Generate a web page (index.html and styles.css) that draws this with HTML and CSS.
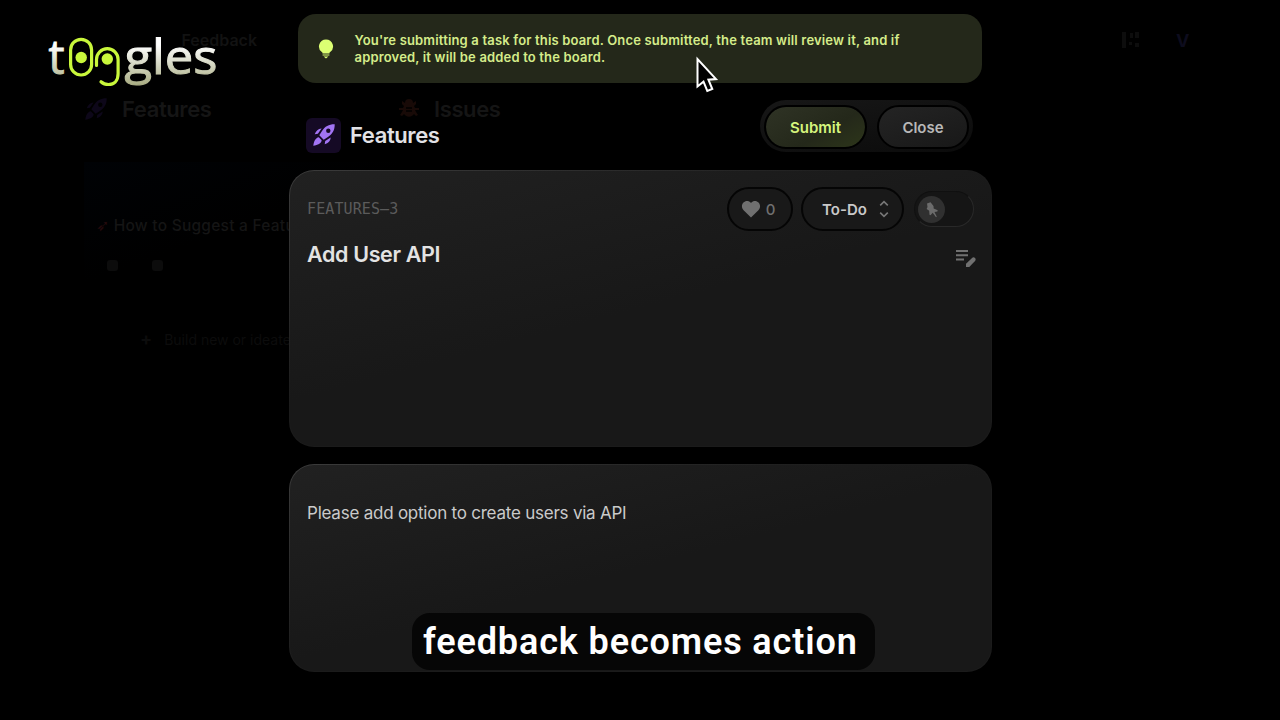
FILE: index.html
```
<!DOCTYPE html>
<html lang="en">
<head>
    <meta charset="UTF-8">
    <meta name="viewport" content="width=device-width, initial-scale=1.0">
    <title>Toggles - Features</title>
    <link rel="stylesheet" href="styles.css">
</head>
<body>
    <!-- Board behind the dialog -->
    <div class="board">
        <header class="board-top">
            <div class="board-name">Feedback</div>
            <svg class="board-view" width="20" height="18" viewBox="0 0 20 18" fill="currentColor">
                <path d="M1 1h4v16H1zM9 2h3v5H9zM14 1h4v6h-4zM8 11h3v3H8zM14 12h4v4h-4z"/>
            </svg>
            <div class="avatar">V</div>
        </header>
        <div class="columns">
            <section class="column">
                <h2>
                    <svg class="col-rocket" width="24" height="24" viewBox="0 0 24 24"><use href="#rocket"/></svg>
                    Features
                </h2>
                <div class="board-card">
                    <p><span class="pin-mark">➶</span> How to Suggest a Feature</p>
                    <div class="board-meta"><i></i><i></i></div>
                </div>
                <div class="add-new"><b>+</b> Build new or ideate</div>
            </section>
            <section class="column">
                <h2>
                    <svg class="col-bug" width="22" height="22" viewBox="0 0 22 22" fill="currentColor">
                        <path d="M7 5a4 4 0 0 1 8 0l3-2v3l-2 2 1 2h4v2h-4l1 2 2 3-2 1-2-2a6 6 0 0 1-10 0l-2 2-2-1 2-3 1-2H1v-2h4l1-2-2-2V3z"/>
                        <path d="M8 10h6M8 13h6" stroke="#000" stroke-width="1.5"/>
                    </svg>
                    Issues
                </h2>
            </section>
        </div>
    </div>

    <!-- Submit dialog -->
    <main class="dialog">
        <div class="notice">
            <svg width="16" height="20" viewBox="0 0 16 20" fill="currentColor">
                <path d="M8 .5a7 7 0 0 0-4.200 12.600c.6.4.7.7.7 1.400h7c0-.7.1-1 .7-1.400A7 7 0 0 0 8 .5z"/>
                <path d="M4.600 15.400h6.800v1.200H4.600zM5.600 17.400h4.800L8 19.400z"/>
            </svg>
            <p>
                You're submitting a task for this board. Once submitted, the team will review it, and if<br>
                approved, it will be added to the board.
            </p>
        </div>

        <div class="dialog-head">
            <div class="dialog-title">
                <div class="rocket-box">
                    <svg width="24" height="24" viewBox="0 0 24 24" fill="currentColor">
                        <g id="rocket">
                            <path fill-rule="evenodd" d="M22.700 1.300C17 1.200 13 3.300 10 8.100L7.300 12.300l4.400 4.400 4.200-2.700c4.800-3 6.900-7 6.800-12.700zM16.300 5.600a2.200 2.200 0 1 1 0 4.400 2.200 2.200 0 0 1 0-4.400z"/>
                            <path d="M9.600 5.400C6.300 5.300 4 7.700 2.700 11.300l3.200-.5zM18.600 14.400c.1 3.300-2.300 5.600-5.900 6.900l.5-3.200zM6.800 14.300l2.900 2.900c-.6 3.300-3.700 4.800-8.400 5.500.7-4.700 2.200-7.800 5.500-8.400z"/>
                        </g>
                    </svg>
                </div>
                <h1>Features</h1>
            </div>
            <div class="actions">
                <button class="submit">Submit</button>
                <button class="close">Close</button>
            </div>
        </div>

        <section class="card task">
            <div class="task-bar">
                <span class="task-id">FEATURES–3</span>
                <div class="pill votes">
                    <svg width="20" height="18" viewBox="0 0 20 18" fill="currentColor"><path d="M10 17.500 2.600 10.200C-2.500 4.800 5.200-2.500 10 3.100c4.800-5.600 12.500 1.700 7.400 7.100z"/></svg>
                    0
                </div>
                <div class="pill status">
                    To-Do
                    <svg width="10" height="18" viewBox="0 0 10 18" fill="none" stroke="currentColor" stroke-width="1.6"><path d="M1.200 5.400 5 1.600l3.800 3.800M1.200 12.600 5 16.400l3.800-3.800"/></svg>
                </div>
                <div class="toggle">
                    <div class="knob">
                        <svg width="16" height="17" viewBox="0 0 16 17" fill="currentColor"><path d="M3 2.500 6.500 1.200 9.500 5l.2 2.500 4 1.800-.3 1.200-2.900.5 2.300 4.800-.8.400-3.300-4.400-2.200 2.400-1-.5-.3-3.900L2.600 8l.9-2z"/></svg>
                    </div>
                </div>
            </div>
            <div class="task-head">
                <h2>Add User API</h2>
                <svg width="21" height="19" viewBox="0 0 21 19" fill="currentColor">
                    <path d="M1 1h12v2H1zM1 5.200h12v2H1zM1 9.400h8v2H1z"/>
                    <path d="M11 18v-3.300l5.800-5.500c1.100-1 2.200-1.200 3.200-.2s.8 2.200-.2 3.300L14.300 18z"/>
                </svg>
            </div>
        </section>

        <section class="card description">
            <p>Please add option to create users via API</p>
        </section>
    </main>

    <svg class="logo" width="180" height="72" viewBox="0 0 180 72">
        <defs>
            <linearGradient id="fade" gradientUnits="userSpaceOnUse" x1="0" y1="8" x2="0" y2="55">
                <stop offset="0.150" stop-color="#fff"/>
                <stop offset="1" stop-color="#a9ad83"/>
            </linearGradient>
        </defs>
        <text x="3.500" y="44" textLength="16" lengthAdjust="spacingAndGlyphs">t</text>
        <g fill="none" stroke="#c9f73b" stroke-width="3.200" stroke-linecap="round">
            <rect x="25.600" y="9.400" width="21" height="35.600" rx="10.500"/>
            <path d="M51.500 35.500V29.500a10.800 10.800 0 0 1 21.600 0V43.500c0 8-4.600 11-9.600 11-3.200 0-5.500-1-7.500-2.800"/>
        </g>
        <circle cx="36.200" cy="27.500" r="5.700" fill="#c9f73b"/>
        <circle cx="62.300" cy="29" r="5.700" fill="#c9f73b"/>
        <text x="79.500" y="44" textLength="93" lengthAdjust="spacingAndGlyphs">gles</text>
    </svg>

    <svg class="pointer" width="26" height="40" viewBox="0 0 26 40">
        <path d="M4.500 4v27.500l6-4.800 3.800 9.300 5-2-3.900-9.300 7.600-.6z" fill="#000" stroke="#fff" stroke-width="2"/>
    </svg>

    <div class="caption">feedback becomes action</div>
</body>
</html>
```
FILE: styles.css
```
* {
    margin: 0;
    padding: 0;
    box-sizing: border-box;
}
body {
    position: relative;
    width: 1280px;
    height: 720px;
    overflow: hidden;
    background: #000;
    font-family: Inter, sans-serif;
}

/* Board */
.board {
    position: absolute;
    inset: 0;
    padding: 28px 84px;
    color: #151515;
}
.board-top {
    display: flex;
    align-items: center;
    height: 24px;
}
.board-name {
    width: 173px;
    margin-right: auto;
    text-align: right;
    font-size: 16px;
    font-weight: 600;
    color: #121212;
}
.board-view {
    margin-right: 35px;
    color: #0d0d0d;
}
.avatar {
    width: 20px;
    font-size: 18px;
    font-weight: 700;
    color: #0d0c1d;
}
.columns {
    display: flex;
    margin-top: 43px;
}
.column {
    width: 312px;
}
.column h2 {
    display: flex;
    align-items: center;
    gap: 14px;
    height: 28px;
    font-size: 22px;
    font-weight: 600;
    letter-spacing: -0.4px;
}
.col-rocket {
    fill: #0d0719;
}
.col-bug {
    margin-left: 2px;
    color: #180a07;
}
.board-card {
    margin-top: 39px;
    height: 157px;
    padding: 54px 12px 0;
    font-size: 15.5px;
    font-weight: 500;
    letter-spacing: 0.25px;
    white-space: nowrap;
    background: linear-gradient(160deg, #000205, #000 45%);
}
.pin-mark {
    color: #240a0c;
}
.board-meta {
    display: flex;
    gap: 34px;
    margin: 25px 11px;
}
.board-meta i {
    width: 11px;
    height: 11px;
    border-radius: 3px;
    background: #0c0c0c;
}
.add-new {
    margin: 9px 0 0 56px;
    font-size: 14px;
    color: #0c0c0c;
}
.add-new b {
    margin-right: 8px;
    font-size: 18px;
}

/* Dialog */
.dialog {
    position: relative;
    width: 703px;
    margin: 0 0 0 289px;
    padding-top: 14px;
}
.notice {
    display: flex;
    align-items: center;
    gap: 20.5px;
    width: 684px;
    height: 69px;
    margin-left: 9px;
    padding-left: 20px;
    border-radius: 18px;
    background: #24281a;
    color: #dcff73;
}
.notice p {
    color: #d5ec8a;
    font-size: 13px;
    font-weight: 600;
    line-height: 17px;
    letter-spacing: 0.17px;
    white-space: nowrap;
}
.dialog-head {
    display: flex;
    justify-content: space-between;
    height: 87px;
    padding: 17px 19px 0 17px;
}
.dialog-title {
    display: flex;
    align-items: center;
    gap: 9px;
    height: 36px;
    margin-top: 17px;
}
.rocket-box {
    display: flex;
    align-items: center;
    justify-content: center;
    width: 35px;
    height: 35px;
    border-radius: 6px;
    background: #150a25;
    color: #a274f4;
}
.dialog-title h1 {
    font-size: 22px;
    font-weight: 600;
    letter-spacing: -0.4px;
    color: #e2e2e6;
}
.actions {
    display: flex;
    gap: 10px;
    width: 213px;
    height: 52px;
    padding: 5px 4px;
    border-radius: 26px;
    background: linear-gradient(170deg, #171717, #0b0b0b);
}
.actions button {
    height: 44px;
    border: 2px solid #000;
    border-radius: 22px;
    font-family: inherit;
    font-size: 15px;
    font-weight: 600;
}
.submit {
    width: 103px;
    background: linear-gradient(150deg, #2f3325, #24281a 60%, #2d361a) padding-box;
    color: #d5f47c;
}
.close {
    width: 92px;
    background: linear-gradient(160deg, #242424, #181818);
    color: #b8b8b8;
}

/* Cards */
.card {
    border: 1px solid transparent;
    border-radius: 25px;
    background: linear-gradient(165deg, #212121, #181818 50%) padding-box,
                linear-gradient(160deg, #3b3b3b, #1b1b1b 45%) border-box;
}
.task {
    height: 277px;
    padding: 16px 15px 0 17px;
}
.task-bar {
    display: flex;
    align-items: center;
    height: 44px;
    padding-right: 2px;
}
.task-id {
    margin-right: auto;
    font-family: "DejaVu Sans Mono", monospace;
    font-size: 15px;
    letter-spacing: 0.1px;
    color: #5b5b5b;
}
.pill {
    display: flex;
    align-items: center;
    justify-content: center;
    height: 44px;
    border: 2px solid #050505;
    border-radius: 22px;
    background: #191919;
    font-size: 15px;
    font-weight: 600;
}
.votes {
    gap: 5px;
    width: 66px;
    margin-right: 8px;
    padding-right: 4px;
    font-weight: 500;
    color: #707070;
}
.status {
    gap: 12px;
    width: 103px;
    margin-right: 10px;
    padding-left: 6px;
    color: #c9c9c9;
}
.status svg {
    color: #777;
}
.toggle {
    width: 60px;
    height: 36px;
    padding: 4px 3px;
    border-radius: 18px;
    background: #151515;
    border: 1px solid;
    border-color: #101010 #292929 #292929 #111;
}
.knob {
    display: flex;
    align-items: center;
    justify-content: center;
    width: 27px;
    height: 27px;
    border-radius: 50%;
    background: #303030;
    color: #6c6c6c;
}
.task-head {
    display: flex;
    justify-content: space-between;
    align-items: center;
    margin-top: 8px;
    height: 29px;
}
.task-head h2 {
    font-size: 21.5px;
    font-weight: 600;
    letter-spacing: -0.35px;
    color: #e3e3e3;
}
.task-head svg {
    margin-top: 10px;
    color: #707070;
}
.description {
    height: 208px;
    margin-top: 17px;
    padding: 37px 17px;
    font-size: 17px;
    line-height: 22px;
    letter-spacing: -0.23px;
    color: #cacaca;
}

/* Layers above the dialog */
.logo {
    position: absolute;
    left: 45px;
    top: 30px;
    overflow: visible;
    font-family: "Open Sans", sans-serif;
    font-size: 48px;
}
.logo text {
    fill: url(#fade);
    stroke: url(#fade);
    stroke-width: 1px;
}
.pointer {
    position: absolute;
    left: 693px;
    top: 55px;
}
.caption {
    position: absolute;
    left: 412px;
    top: 613px;
    width: 463px;
    height: 57px;
    padding-left: 11px;
    border-radius: 18px;
    background: #060606;
    color: #fff;
    font-family: Roboto, sans-serif;
    font-size: 36px;
    font-weight: 600;
    line-height: 58px;
    letter-spacing: 0.87px;
    white-space: nowrap;
}
```
